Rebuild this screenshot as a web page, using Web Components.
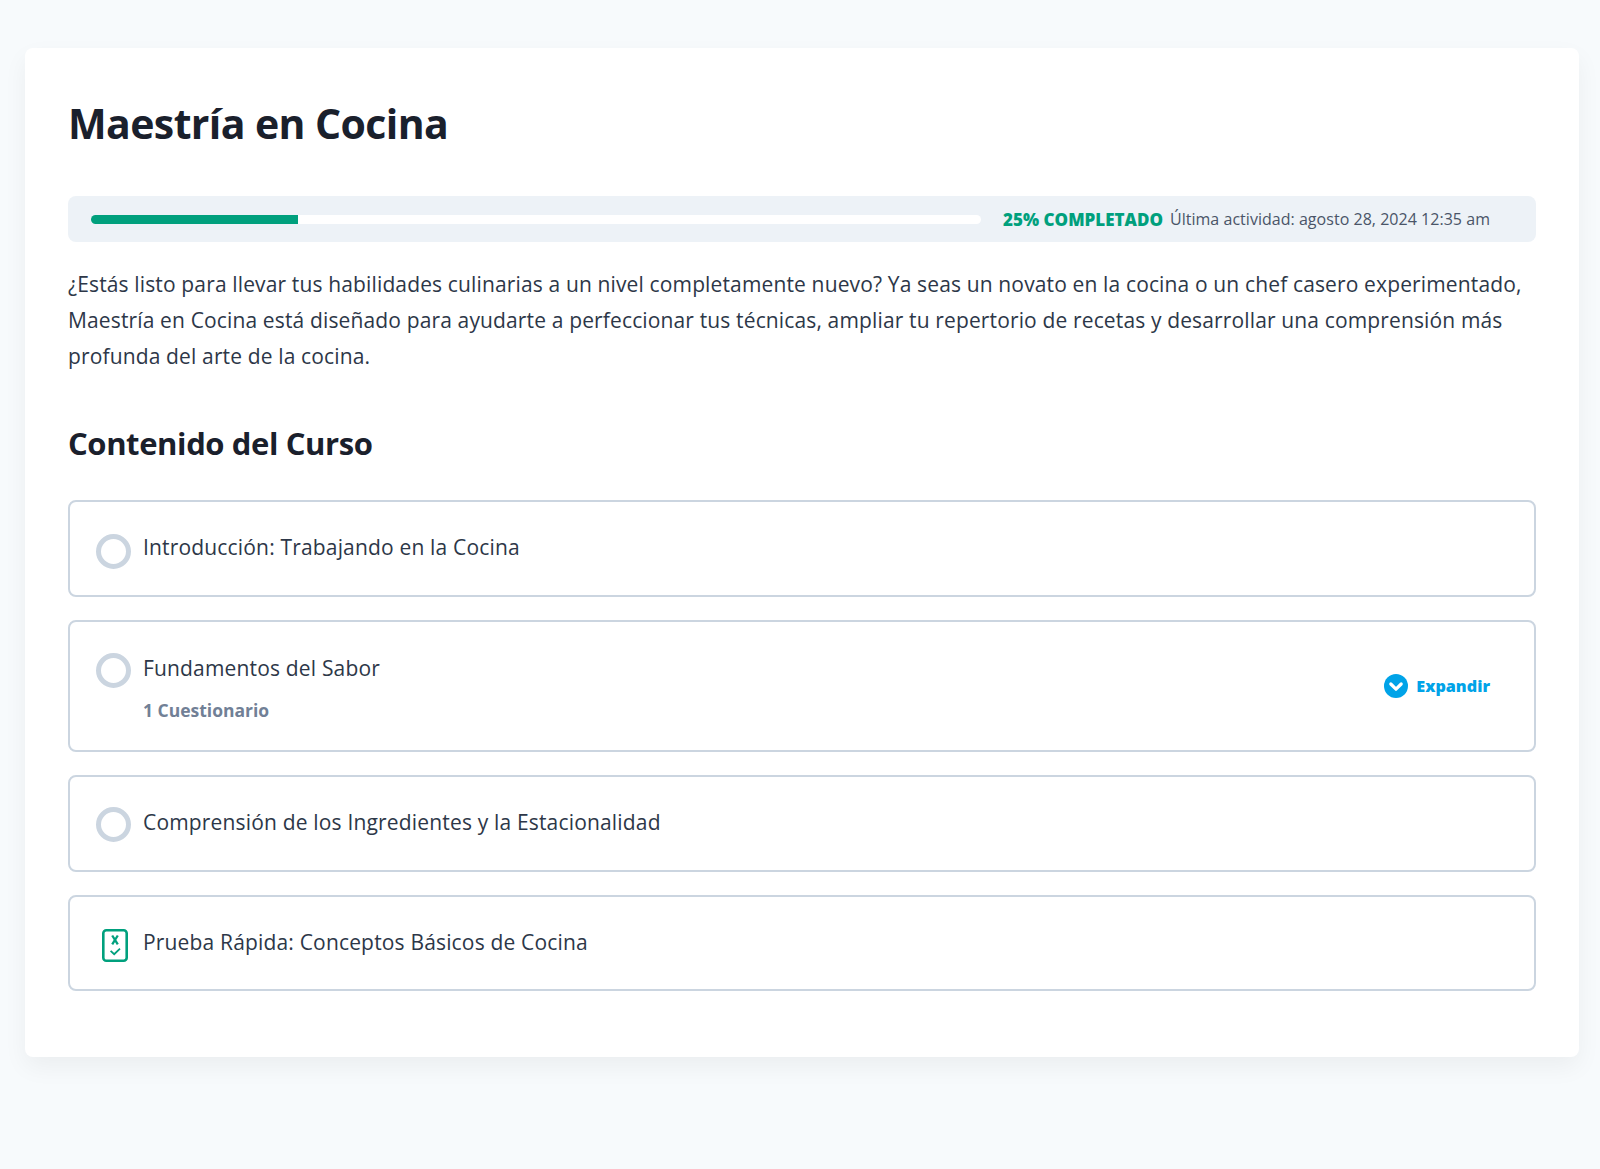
<!DOCTYPE html>
<html lang="es">
<head>
<meta charset="utf-8">
<title>Maestría en Cocina</title>
<style>
  html, body { margin: 0; background: #f7fafc; }
  body { font-family: "Open Sans", "Noto Sans", sans-serif; color: #2d3748; }
</style>
</head>
<body>
<course-page>
  <progress-summary percent="23.3" label="25% Completado" activity="Última actividad: agosto 28, 2024 12:35 am"></progress-summary>
  <course-item status="todo" offset="32">Introducción: Trabajando en la Cocina</course-item>
  <course-item status="todo" sub="1 Cuestionario" expandable>Fundamentos del Sabor</course-item>
  <course-item status="todo" offset="30">Comprensión de los Ingredientes y la Estacionalidad</course-item>
  <course-item status="quiz" offset="32">Prueba Rápida: Conceptos Básicos de Cocina</course-item>
</course-page>

<script>
/**
 * Page card: title, progress slot, description and the course content list
 */
class CoursePage extends HTMLElement {
  constructor() {
    super();
    this.attachShadow({ mode: 'open' });
    this.shadowRoot.innerHTML = `
      <style>
        :host {
          display: block;
          padding: 48px 21px 112px 25px;
        }

        .card {
          background: #fff;
          border-radius: 8px;
          box-shadow: 0 10px 25px rgba(0, 0, 0, 0.05);
          padding: 49px 43px 66px;
        }

        h1 {
          margin: 0 0 47px;
          font-size: 41px;
          line-height: 52px;
          font-weight: 700;
          letter-spacing: -0.6px;
          color: #1a202c;
        }

        p {
          margin: 24px 0 0;
          font-size: 21px;
          letter-spacing: 0.14px;
          line-height: 36px;
          color: #2d3748;
        }

        h2 {
          margin: 49px 0 0;
          font-size: 31px;
          line-height: 40px;
          font-weight: 700;
          letter-spacing: -0.4px;
          color: #1a202c;
        }

        .items {
          display: flex;
          flex-direction: column;
          gap: 23.25px;
          margin-top: 37px;
        }
      </style>
      <div class="card">
        <h1>Maestría en Cocina</h1>
        <slot name="progress"></slot>
        <p>¿Estás listo para llevar tus habilidades culinarias a un nivel completamente nuevo? Ya seas un novato en la cocina o un chef casero experimentado, Maestría en Cocina está diseñado para ayudarte a perfeccionar tus técnicas, ampliar tu repertorio de recetas y desarrollar una comprensión más profunda del arte de la cocina.</p>
        <h2>Contenido del Curso</h2>
        <div class="items"><slot></slot></div>
      </div>
    `;
  }

  connectedCallback() {
    const bar = this.querySelector('progress-summary');
    if (bar) bar.slot = 'progress';
  }
}

/**
 * Progress bar strip with percentage and last activity
 */
class ProgressSummary extends HTMLElement {
  constructor() {
    super();
    this.attachShadow({ mode: 'open' });
  }

  connectedCallback() {
    this.shadowRoot.innerHTML = `
      <style>
        :host {
          display: block;
        }

        .strip {
          display: flex;
          align-items: center;
          height: 46px;
          padding: 0 46px 0 23px;
          background: #edf2f7;
          border-radius: 8px;
        }

        .track {
          flex: 1;
          height: 9px;
          background: #fff;
          border-radius: 5px;
          overflow: hidden;
          margin-right: 22px;
        }

        .fill {
          height: 100%;
          background: #00a07d;
        }

        .label {
          font-size: 17px;
          font-weight: 800;
          text-transform: uppercase;
          color: #00a07d;
          margin-right: 7px;
        }

        .activity {
          font-size: 16px;
          letter-spacing: 0.03px;
          color: #4a5568;
        }
      </style>
      <div class="strip">
        <div class="track"><div class="fill" style="width: ${this.getAttribute('percent')}%"></div></div>
        <span class="label">${this.getAttribute('label')}</span>
        <span class="activity">${this.getAttribute('activity')}</span>
      </div>
    `;
  }
}

/**
 * One row of the course content list
 */
class CourseItem extends HTMLElement {
  constructor() {
    super();
    this.attachShadow({ mode: 'open' });
  }

  connectedCallback() {
    const sub = this.getAttribute('sub');
    const quiz = this.getAttribute('status') === 'quiz';
    const icon = quiz
      ? `<svg class="quiz" viewBox="0 0 26 33" width="26" height="33" fill="none" stroke="#00a07d">
           <rect x="1.3" y="1.3" width="23.4" height="30.4" rx="3" stroke-width="2.6"/>
           <path d="M10.2 6.5l5.6 8.8M15.8 6.5l-5.6 8.8" stroke-width="2.3"/>
           <path d="M8.6 21.8l3.6 3.4 5.8-5.6" stroke-width="1.8"/>
         </svg>`
      : `<span class="circle"></span>`;
    const offset = this.getAttribute('offset');

    this.shadowRoot.innerHTML = `
      <style>
        :host {
          display: block;
        }

        .row {
          display: flex;
          align-items: center;
          min-height: 92.5px;
          padding: 0 44px 0 26px;
          background: #fff;
          border: 2px solid #cbd5e0;
          border-radius: 8px;
        }

        .row.has-sub {
          padding-top: 20px;
          padding-bottom: 18px;
          min-height: 90px;
        }

        .lead {
          flex: none;
          width: 47px;
          align-self: flex-start;
          margin-top: ${offset || 11}px;
          line-height: 0;
        }

        .circle {
          display: block;
          width: 35px;
          height: 35px;
          box-sizing: border-box;
          border: 5px solid #cbd5e0;
          border-radius: 50%;
        }

        .quiz {
          display: block;
          margin-left: 5.5px;
        }

        .main {
          flex: 1;
          margin-top: -2px;
        }

        .row.has-sub .main {
          margin-top: 0;
        }

        .title {
          font-size: 21px;
          letter-spacing: 0.17px;
          line-height: 30px;
          color: #2d3748;
        }

        .sub {
          margin-top: 16px;
          font-size: 17.5px;
          line-height: 22px;
          font-weight: 700;
          color: #718096;
        }

        .expand {
          display: flex;
          align-items: center;
          gap: 8.5px;
          margin-top: -2px;
          font-size: 16.2px;
          font-weight: 800;
          color: #00a3e8;
        }
      </style>
      <div class="row ${sub ? 'has-sub' : ''}">
        <div class="lead">${icon}</div>
        <div class="main">
          <div class="title"><slot></slot></div>
          ${sub ? `<div class="sub">${sub}</div>` : ''}
        </div>
        ${this.hasAttribute('expandable') ? `
          <div class="expand">
            <svg viewBox="0 0 24 24" width="24" height="24">
              <circle cx="12" cy="12" r="12" fill="#00a3e8"/>
              <path d="M6.8 10l5.2 5.2L17.2 10" fill="none" stroke="#fff" stroke-width="3.2" stroke-linecap="round" stroke-linejoin="round"/>
            </svg>
            Expandir
          </div>` : ''}
      </div>
    `;
  }
}

customElements.define('course-page', CoursePage);
customElements.define('progress-summary', ProgressSummary);
customElements.define('course-item', CourseItem);
</script>
</body>
</html>
